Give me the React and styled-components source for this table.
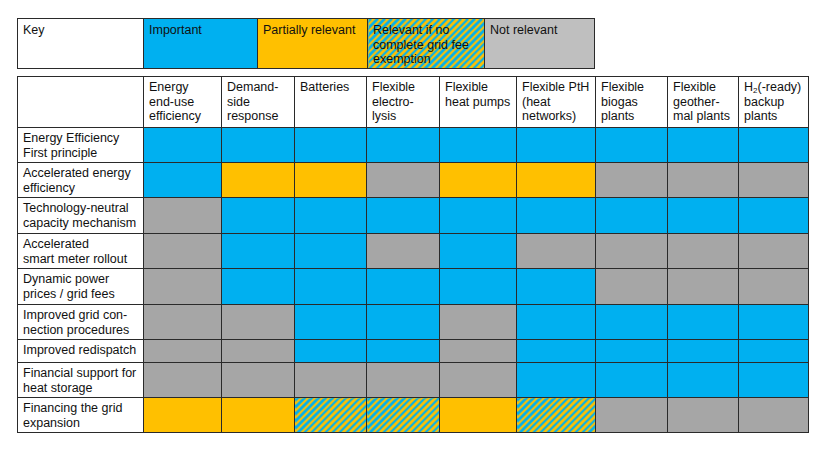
import styled, { createGlobalStyle, css } from "styled-components";

const GlobalStyle = createGlobalStyle`
  body {
    margin: 0;
    background: #ffffff;
    font-family: "Liberation Sans", Arial, sans-serif;
  }
`;

const colors = {
  B: "#00b0f0",
  O: "#ffc000",
  G: "#a6a6a6",
  L: "#bfbfbf",
};

const hatch = css`
  background: repeating-linear-gradient(
    135deg,
    #00b0f0 0px,
    #00b0f0 2.4px,
    #ffc000 2.4px,
    #ffc000 4.9px
  );
`;

const columns = [
  { width: 78, label: ["Energy", "end-use", "efficiency"] },
  { width: 73, label: ["Demand-", "side", "response"] },
  { width: 72, label: ["Batteries"] },
  { width: 73, label: ["Flexible", "electro-", "lysis"] },
  { width: 77, label: ["Flexible", "heat pumps"] },
  { width: 79, label: ["Flexible PtH", "(heat", "networks)"] },
  { width: 72, label: ["Flexible", "biogas", "plants"] },
  { width: 71, label: ["Flexible", "geother-", "mal plants"] },
  { width: 70, label: ["H2", "backup", "plants"] },
];

const rows = [
  { label: ["Energy Efficiency", "First principle"], h: 35, cells: "BBBBBBBBB" },
  { label: ["Accelerated energy", "efficiency"], h: 35, cells: "BOOGOOGGG" },
  { label: ["Technology-neutral", "capacity mechanism"], h: 36, cells: "GBBBBBBBB" },
  { label: ["Accelerated", "smart meter rollout"], h: 35, cells: "GBBGBGGGG" },
  { label: ["Dynamic power", "prices / grid fees"], h: 36, cells: "GBBBBBGGG" },
  { label: ["Improved grid con-", "nection procedures"], h: 35, cells: "GGBBGBBBB" },
  { label: ["Improved redispatch"], h: 23, cells: "GGBBGBBBB" },
  { label: ["Financial support for", "heat storage"], h: 35, cells: "GGGGGBBBB" },
  { label: ["Financing the grid", "expansion"], h: 35, cells: "OOHHOHGGG" },
];

const keyItems = [
  { text: "Key", width: 126, tone: "W" },
  { text: "Important", width: 114, tone: "B" },
  { text: "Partially relevant", width: 110, tone: "O" },
  { text: "Relevant if no complete grid fee exemption", width: 117, tone: "H" },
  { text: "Not relevant", width: 110, tone: "L" },
];

function Lines({ lines }) {
  return lines.map((line, i) => (
    <Line key={i}>
      {line === "H2" ? (
        <>
          H<Sub>2</Sub>(-ready)
        </>
      ) : (
        line
      )}
    </Line>
  ));
}

export default function App() {
  return (
    <Page>
      <GlobalStyle />
      <Grid $width={577}>
        <colgroup>
          {keyItems.map((k) => (
            <col key={k.text} style={{ width: k.width }} />
          ))}
        </colgroup>
        <tbody>
          <tr>
            {keyItems.map((k) => (
              <KeyCell key={k.text} $tone={k.tone}>
                {k.text}
              </KeyCell>
            ))}
          </tr>
        </tbody>
      </Grid>

      <Grid $width={791}>
        <colgroup>
          <col style={{ width: 126 }} />
          {columns.map((c, i) => (
            <col key={i} style={{ width: c.width }} />
          ))}
        </colgroup>
        <thead>
          <HeadRow>
            <TextCell />
            {columns.map((c, i) => (
              <TextCell key={i}>
                <Lines lines={c.label} />
              </TextCell>
            ))}
          </HeadRow>
        </thead>
        <tbody>
          {rows.map((r, i) => (
            <BodyRow key={i} $h={r.h}>
              <TextCell>
                <Lines lines={r.label} />
              </TextCell>
              {r.cells.split("").map((t, j) => (
                <FillCell key={j} $tone={t} />
              ))}
            </BodyRow>
          ))}
        </tbody>
      </Grid>
    </Page>
  );
}

const Page = styled.div`
  display: flex;
  flex-direction: column;
  gap: 7px;
  padding: 18px 0 0 17px;
`;

const Grid = styled.table`
  width: ${({ $width }) => $width}px;
  table-layout: fixed;
  border-collapse: collapse;
  font-size: 12.5px;
  line-height: 14.6px;
  color: #111;
`;

const HeadRow = styled.tr`
  height: 51px;
`;

const BodyRow = styled.tr`
  height: ${({ $h }) => $h}px;
`;

const cellBase = css`
  border: 1px solid #2a2a2a;
  padding: 3px 3px 1px 5px;
  vertical-align: top;
  text-align: left;
  font-weight: normal;
`;

const TextCell = styled.td`
  ${cellBase}
  background: #ffffff;
`;

const FillCell = styled.td`
  ${cellBase}
  ${({ $tone }) => ($tone === "H" ? hatch : `background: ${colors[$tone]};`)}
`;

const KeyCell = styled.td`
  ${cellBase}
  height: 50px;
  box-sizing: border-box;
  padding-top: 4px;
  ${({ $tone }) =>
    $tone === "H"
      ? hatch
      : `background: ${$tone === "W" ? "#ffffff" : colors[$tone]};`}
`;

const Line = styled.div`
  white-space: nowrap;
`;

const Sub = styled.sub`
  font-size: 8px;
  line-height: 0;
  vertical-align: -2px;
`;
